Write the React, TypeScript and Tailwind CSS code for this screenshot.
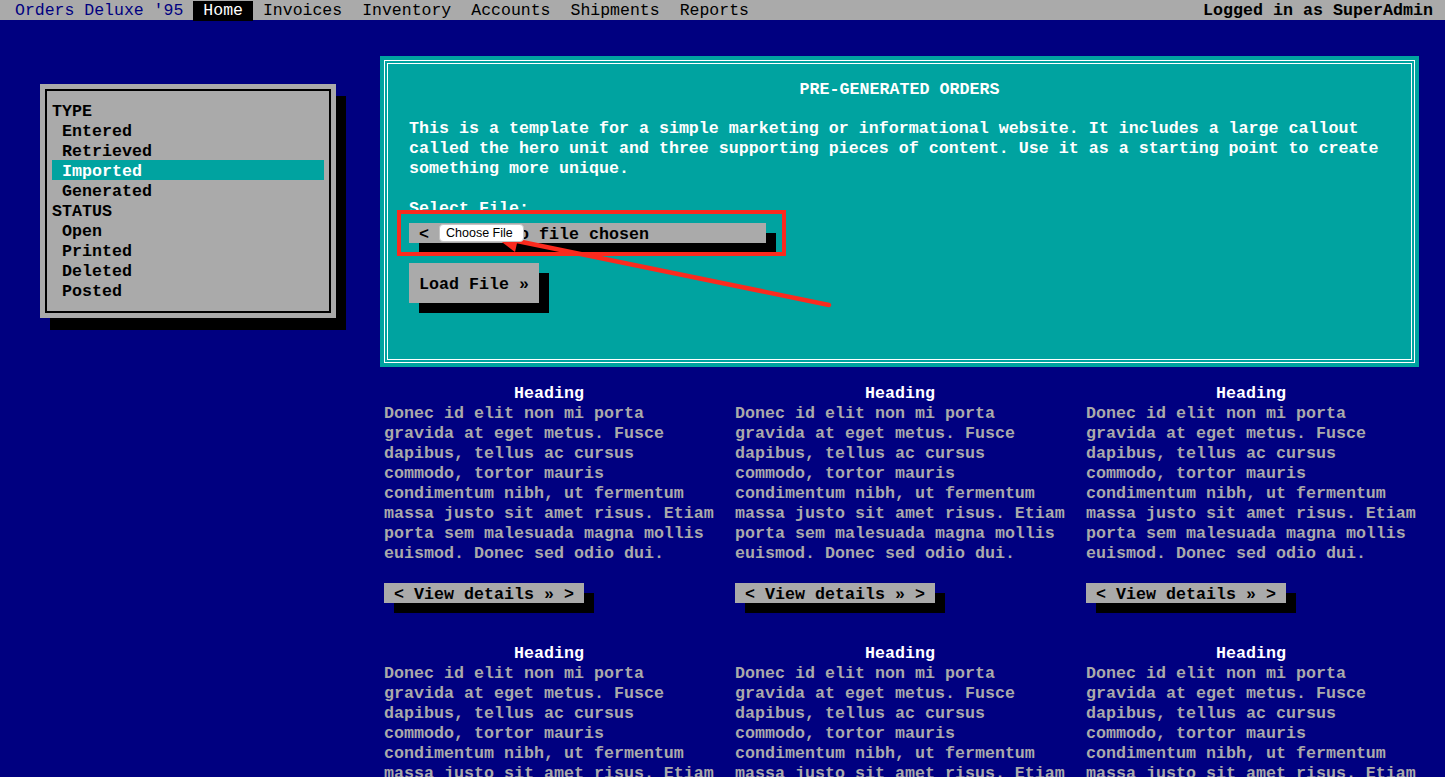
import React from "react";

const navItems = ["Invoices", "Inventory", "Accounts", "Shipments", "Reports"];

const typeItems = ["Entered", "Retrieved", "Imported", "Generated"];
const statusItems = ["Open", "Printed", "Deleted", "Posted"];

const lorem =
  "Donec id elit non mi porta gravida at eget metus. Fusce dapibus, tellus ac cursus commodo, tortor mauris condimentum nibh, ut fermentum massa justo sit amet risus. Etiam porta sem malesuada magna mollis euismod. Donec sed odio dui.";

function SideRow({ label, active }: { label: string; active?: boolean }) {
  return (
    <div
      className={
        active
          ? "h-[20px] pt-[2px] pl-[10px] bg-[#00a3a0] text-white"
          : "h-[20px] pt-[2px] pl-[10px] text-black"
      }
    >
      {label}
    </div>
  );
}

function Column() {
  return (
    <div className="w-[330px]">
      <h2 className="pt-[2px] text-center text-white">Heading</h2>
      <p className="text-[#aaaaaa]">{lorem}</p>
      <div className="mt-[19px] flex">
        <span className="h-[20px] bg-[#aaaaaa] px-[10px] pt-[2px] text-black shadow-[10px_10px_0_#000]">
          {"< View details » >"}
        </span>
      </div>
    </div>
  );
}

export default function App() {
  return (
    <div className="relative min-h-screen bg-[#000080] font-['Liberation_Mono',monospace] text-[16.66px] leading-[20px] font-bold">
      {/* top bar */}
      <nav className="flex h-[20px] items-start justify-between bg-[#aaaaaa] pt-[1px]">
        <div className="flex text-[16.5px] font-normal">
          <span className="pl-[15px] pr-[10px] text-[#000080]">Orders Deluxe '95</span>
          <span className="bg-black px-[10px] text-white">Home</span>
          {navItems.map((n) => (
            <span key={n} className="px-[10px] text-black">
              {n}
            </span>
          ))}
        </div>
        <span className="pr-[12px] text-black">Logged in as SuperAdmin</span>
      </nav>

      <div className="flex">
        {/* sidebar */}
        <aside className="w-[380px] shrink-0 pl-[40px] pt-[64px]">
          <div className="w-[296px] bg-[#aaaaaa] p-[5px] shadow-[10px_12px_0_#000]">
            <div className="border-2 border-black px-[5px] pt-[9px] pb-[11px]">
              <div className="h-[20px] pt-[2px] text-black">TYPE</div>
              {typeItems.map((t) => (
                <SideRow key={t} label={t} active={t === "Imported"} />
              ))}
              <div className="h-[20px] pt-[2px] text-black">STATUS</div>
              {statusItems.map((t) => (
                <SideRow key={t} label={t} />
              ))}
            </div>
          </div>
        </aside>

        {/* main */}
        <main className="w-[1039px] shrink-0 pt-[36px]">
          <div className="bg-[#00a3a0] p-[4px]">
            <div className="border border-white p-[2px]">
              <div className="border border-white pb-[56px] text-white">
                <h1 className="mt-[16px] text-center">PRE-GENERATED ORDERS</h1>
                <p className="mt-[19px] px-[21px]">
                  This is a template for a simple marketing or informational website. It includes a
                  large callout called the hero unit and three supporting pieces of content. Use it as
                  a starting point to create something more unique.
                </p>
                <div className="mt-[20px] px-[21px]">Select File:</div>
                <div className="mt-[4px] ml-[21px] flex h-[20px] w-[357px] items-start bg-[#aaaaaa] text-black shadow-[10px_10px_0_#000]">
                  <span className="ml-[10px] w-[10px] pt-[2px]">{"<"}</span>
                  <span className="relative z-10 mt-[1px] ml-[10px] mr-[-15px] flex h-[18px] w-[85px] items-center rounded-[4px] border border-[#c4c4c4] bg-white pl-[6px] font-['Liberation_Sans',Arial,sans-serif] text-[12.5px] font-normal">
                    Choose File
                  </span>
                  <span className="pt-[2px]">No file chosen</span>
                </div>
                <div className="mt-[20px] ml-[21px] flex">
                  <span className="h-[40px] bg-[#aaaaaa] px-[10px] pt-[12px] text-black shadow-[10px_10px_0_#000]">
                    Load File »
                  </span>
                </div>
              </div>
            </div>
          </div>

          <div className="ml-[4px] mt-[15px] grid grid-cols-[repeat(3,351px)] gap-y-[39px] pb-[40px]">
            <Column />
            <Column />
            <Column />
            <Column />
            <Column />
            <Column />
          </div>
        </main>
      </div>

      {/* red annotation drawn over the screenshot */}
      <svg
        className="pointer-events-none absolute left-0 top-0"
        width="1445"
        height="777"
        viewBox="0 0 1445 777"
      >
        <rect x="399" y="212" width="385" height="42" fill="none" stroke="#fb2a1e" strokeWidth="4" />
        <line x1="517" y1="241" x2="829" y2="305" stroke="#fb2a1e" strokeWidth="4.5" strokeLinecap="round" />
        <polygon points="494,236 520,230 515,252" fill="#fb2a1e" />
      </svg>
    </div>
  );
}
